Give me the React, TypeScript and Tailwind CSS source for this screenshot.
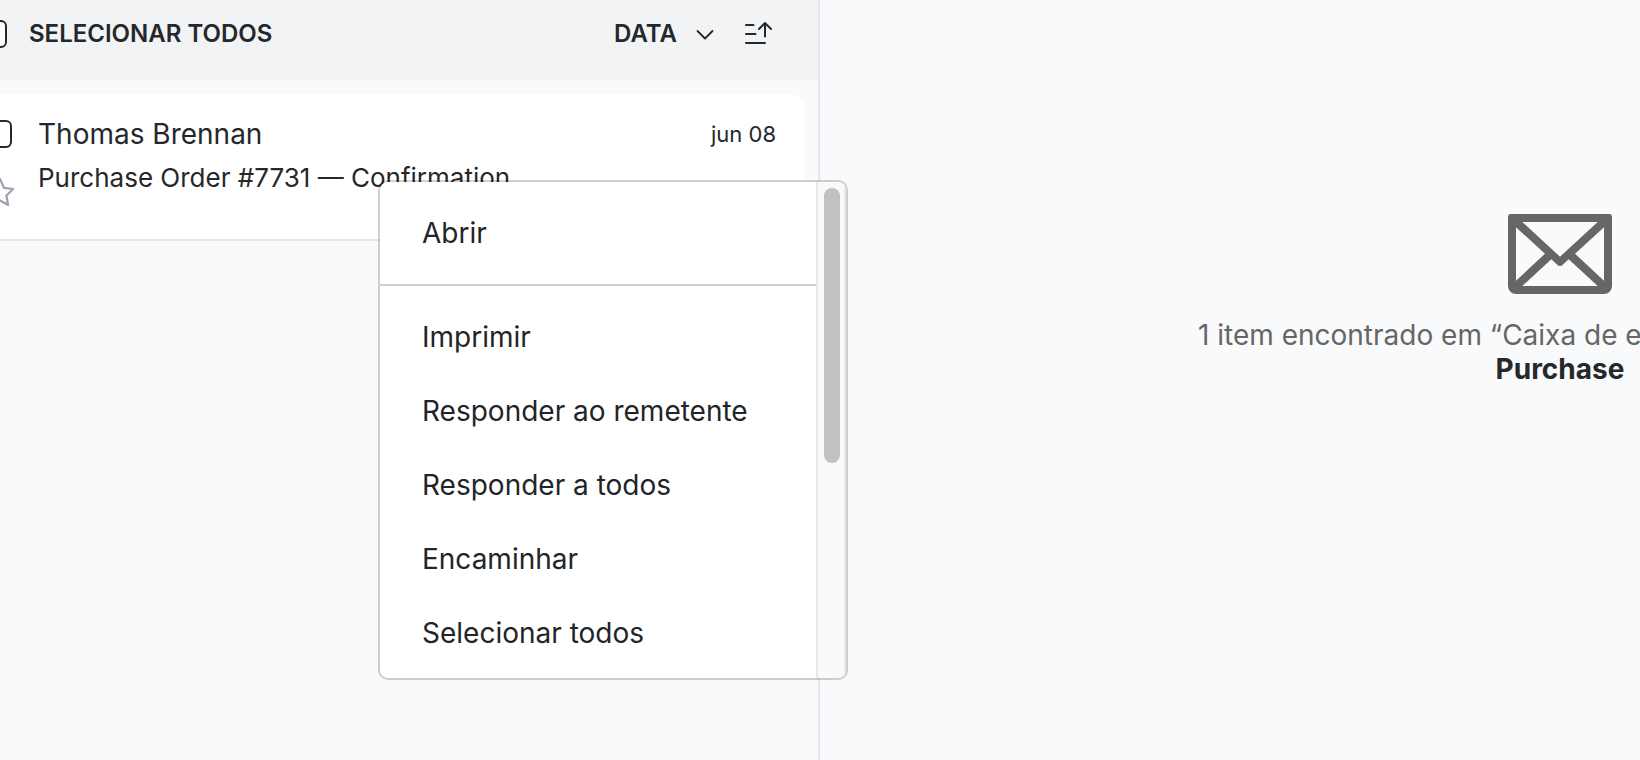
const MENU_GROUPS = [
  ["Abrir"],
  ["Imprimir", "Responder ao remetente", "Responder a todos", "Encaminhar", "Selecionar todos"],
];

function Check({ label }: { label: string }) {
  return (
    <input
      type="checkbox"
      aria-label={label}
      className="size-7 shrink-0 appearance-none rounded-md border-2 border-[#25282b] bg-white"
    />
  );
}

function SortIcon() {
  return (
    <svg className="size-8" viewBox="0 0 32 32" fill="none" stroke="currentColor" strokeWidth="2" strokeLinecap="round" strokeLinejoin="round">
      <path d="M4 7h7.500M4 16h9.500M4 25h19" />
      <path d="M23 18.500V5M17 11l6-6 6 6" />
    </svg>
  );
}

function ChevronIcon() {
  return (
    <svg className="h-8 w-5" viewBox="0 0 20 32" fill="none" stroke="currentColor" strokeWidth="1.800" strokeLinecap="round" strokeLinejoin="round">
      <path d="M2.500 13l7.500 7.500 7.500-7.500" />
    </svg>
  );
}

function StarIcon() {
  return (
    <svg className="size-8" viewBox="0 0 32 32" fill="none" stroke="#9ca3af" strokeWidth="2.200" strokeLinejoin="round">
      <path d="M16 3l4 8.800 9.200 1.200-6.800 6.500 1.700 9.500L16 24.400 7.900 29l1.700-9.500L2.800 13l9.200-1.200z" />
    </svg>
  );
}

function EnvelopeIcon() {
  return (
    <svg className="h-20 w-[104px]" viewBox="0 0 104 80" fill="#666" fillRule="evenodd">
      <path d="M3 0h98a3 3 0 0 1 3 3v69a8 8 0 0 1-8 8H8a8 8 0 0 1-8-8V3a3 3 0 0 1 3-3zM14.300 8L52 42.700 89.700 8zM8 13.300v53.400l29-27zM96 13.300v53.400l-29-27zM14.300 72h75.400l-29-26.700-6.200 5.700q-2.500 2-5 0l-6.200-5.700z" />
    </svg>
  );
}

function MessageCard() {
  return (
    <article className="ml-3 mr-3.5 mt-3.5 flex h-[147px] rounded-tr-[14px] border-b-2 border-[#e5e7eb] bg-white pl-1 pr-7 pt-[26px]">
      <div className="flex w-[54px] shrink-0 flex-col items-start gap-7">
        <Check label="Selecionar mensagem" />
        <button aria-label="Favoritar">
          <StarIcon />
        </button>
      </div>
      <div className="min-w-0 flex-1">
        <div className="flex items-center justify-between">
          <span className="text-[28px] leading-7">Thomas Brennan</span>
          <time className="text-[22px] leading-7">jun 08</time>
        </div>
        <p className="mt-3.5 truncate text-[26px] leading-8">Purchase Order #7731 — Confirmation</p>
      </div>
    </article>
  );
}

function ContextMenu() {
  return (
    <div className="absolute left-[378px] top-[180px] flex h-[500px] w-[470px] overflow-hidden rounded-[10px] border-2 border-black/[0.18] bg-white bg-clip-padding text-[#212529]">
      <ul role="menu" className="flex-1 divide-y-2 divide-[#d0d1d3]">
        {MENU_GROUPS.map((items) => (
          <li key={items[0]} className="py-3.5">
            {items.map((item) => (
              <button key={item} role="menuitem" className="block h-[74px] w-full px-[42px] text-left text-[28px]">
                {item}
              </button>
            ))}
          </li>
        ))}
      </ul>
      {/* Scrollbar */}
      <div className="w-[30px] shrink-0 border-x-2 border-[#e8e8e8] bg-[#fafafa] pl-1.5 pt-1.5">
        <div className="h-[275px] w-4 rounded-full bg-[#c1c1c1]" />
      </div>
    </div>
  );
}

export default function App() {
  return (
    <div className="relative flex min-h-screen overflow-hidden bg-[#f9fafc] font-['Inter',sans-serif] text-[#25282b]">
      <section className="-ml-8 w-[852px] shrink-0 border-r-2 border-[#e5e7eb]">
        <header className="flex h-20 items-center bg-[#f2f3f5] pb-3 pl-[11px] pr-11 text-2xl font-semibold">
          <label className="flex items-center gap-[22px]">
            <Check label="Selecionar todos" />
            SELECIONAR TODOS
          </label>
          <button className="ml-auto flex items-center gap-[18px]">
            DATA
            <ChevronIcon />
          </button>
          <button aria-label="Ordenar" className="ml-[27px]">
            <SortIcon />
          </button>
        </header>
        <MessageCard />
      </section>
      {/* Empty preview pane */}
      <main className="flex min-w-[1480px] flex-1 flex-col items-center pt-[214px] text-[28px] leading-[34px]">
        <EnvelopeIcon />
        <p className="mt-6 w-[724px] whitespace-nowrap text-[#666]">1 item encontrado em “Caixa de entrada”</p>
        <strong className="font-bold">Purchase</strong>
      </main>
      <ContextMenu />
    </div>
  );
}
